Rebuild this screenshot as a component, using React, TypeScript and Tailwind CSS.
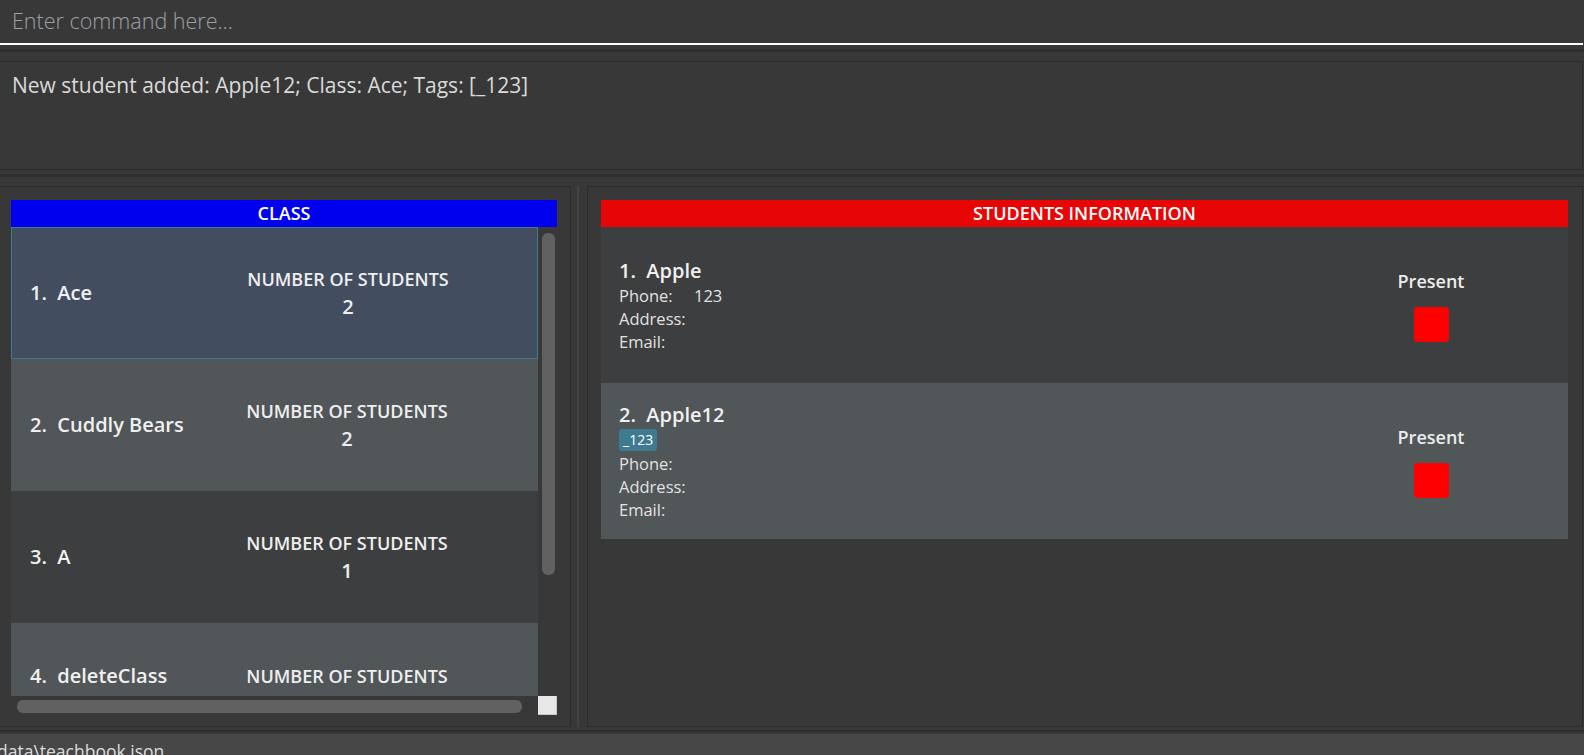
import React from "react";

const classes = [
  { n: 1, name: "Ace", count: 2, bg: "bg-[#424d5f]", selected: true, top: false },
  { n: 2, name: "Cuddly Bears", count: 2, bg: "bg-[#515658]", selected: false, top: false },
  { n: 3, name: "A", count: 1, bg: "bg-[#3c3e3f]", selected: false, top: false },
  { n: 4, name: "deleteClass", count: 0, bg: "bg-[#515658]", selected: false, top: true },
];

function ClassCell({ c }: { c: (typeof classes)[number] }) {
  return (
    <div
      className={`h-[132px] shrink-0 flex ${c.top ? "items-start pt-[39px]" : "items-center"} ${c.bg} ${
        c.selected ? "border border-[#3e7b91]" : ""
      }`}
    >
      <div
        className={`w-[231px] shrink-0 ${c.selected ? "pl-[18px]" : "pl-[19px]"} whitespace-pre text-[20px] font-semibold leading-[28px] text-[#f0f0f0]`}
      >
        {`${c.n}.  ${c.name}`}
      </div>
      <div className="w-[210px] shrink-0 flex flex-col items-center text-[#eeeeee]">
        <div className="text-[18px] font-semibold leading-[28px] whitespace-nowrap">NUMBER OF STUDENTS</div>
        {!c.top && <div className="text-[20px] font-semibold leading-[28px]">{c.count}</div>}
      </div>
    </div>
  );
}

function StudentCard({
  n,
  name,
  phone,
  tag,
  bg,
}: {
  n: number;
  name: string;
  phone?: string;
  tag?: string;
  bg: string;
}) {
  return (
    <div className={`h-[156px] shrink-0 flex items-center ${bg}`}>
      <div className="flex-1 pl-[18px] flex flex-col text-[#e2e2e2]">
        <div className="whitespace-pre text-[20px] font-semibold leading-[26px] text-[#f0f0f0]">{`${n}.  ${name}`}</div>
        {tag && (
          <div className="flex mt-[1px] mb-[1px]">
            <span className="bg-[#3e7b91] rounded-[2px] px-[4px] text-[14px] leading-[22px] text-white">{tag}</span>
          </div>
        )}
        <div className="flex text-[16.5px] leading-[23px]">
          <span className="w-[75px]">Phone:</span>
          {phone && <span>{phone}</span>}
        </div>
        <div className="text-[16.5px] leading-[23px]">Address:</div>
        <div className="text-[16.5px] leading-[23px]">Email:</div>
      </div>
      <div className="w-[100px] mr-[87px] flex flex-col items-center">
        <div className="text-[18px] font-semibold leading-[24px] text-[#ececec]">Present</div>
        <div className="mt-[14px] w-[35px] h-[35px] rounded-[4px] bg-[#ff0000]" />
      </div>
    </div>
  );
}

export default function App() {
  return (
    <div className="w-[1584px] h-[755px] overflow-hidden bg-[#383838] flex flex-col font-['Open_Sans',sans-serif]">
      {/* command box */}
      <div className="h-[45px] shrink-0 border-b-2 border-white flex items-center pl-[12px] mr-[1px] text-[21.5px] font-light text-[#9ca0a4]">
        Enter command here...
      </div>
      {/* divider */}
      <div className="h-[16px] shrink-0 pt-[4px]">
        <div className="h-[3px] bg-[#2e2e2e]" />
      </div>
      {/* result display */}
      <div className="h-[109px] shrink-0 border border-l-0 border-[#2b2b2b] mr-[1px] pl-[12px] pt-[10px] text-[21px] leading-[26px] text-[#dadada]">
        New student added: Apple12; Class: Ace; Tags: [_123]
      </div>
      {/* divider */}
      <div className="h-[16px] shrink-0 pt-[4px]">
        <div className="h-[3px] bg-[#2e2e2e]" />
      </div>
      {/* panels */}
      <div className="h-[541px] shrink-0 flex">
        {/* class panel */}
        <div className="w-[571px] shrink-0 border border-l-0 border-[#2b2b2b] pl-[11px] pr-[13px] pt-[13px] flex flex-col">
          <div className="h-[27px] shrink-0 bg-[#0000ee] flex items-center justify-center text-[18px] font-semibold text-white">
            CLASS
          </div>
          <div className="flex">
            <div className="w-[527px] h-[469px] overflow-hidden flex flex-col">
              {classes.map((c) => (
                <ClassCell key={c.n} c={c} />
              ))}
            </div>
            <div className="w-[19px] h-[469px] pl-[4px] pr-[2px] pt-[6px]">
              <div className="w-[13px] h-[342px] rounded-[6px] bg-[#616161]" />
            </div>
          </div>
          <div className="flex h-[19px]">
            <div className="w-[527px] pl-[6px] pr-[16px] pt-[4px]">
              <div className="h-[13px] rounded-[6px] bg-[#616161]" />
            </div>
            <div className="w-[19px] h-[19px] bg-[#e8e8e8] border-b border-r border-[#c8c8c8]" />
          </div>
        </div>
        {/* split divider */}
        <div className="w-[16px] shrink-0 flex justify-center pr-[2px]">
          <div className="w-[2px] h-full bg-[#434343]" />
        </div>
        {/* students panel */}
        <div className="w-[996px] shrink-0 border border-[#2b2b2b] pl-[13px] pr-[14px] pt-[13px] flex flex-col">
          <div className="h-[27px] shrink-0 bg-[#e80505] flex items-center justify-center text-[18px] font-semibold text-white">
            STUDENTS INFORMATION
          </div>
          <div className="flex flex-col">
            <StudentCard n={1} name="Apple" phone="123" bg="bg-[#3c3e3f]" />
            <StudentCard n={2} name="Apple12" tag="_123" bg="bg-[#515658]" />
          </div>
        </div>
      </div>
      {/* divider */}
      <div className="h-[7px] shrink-0 pt-[3px]">
        <div className="h-[2px] bg-[#2e2e2e]" />
      </div>
      {/* status bar */}
      <div className="flex-1 bg-[#474747] pt-[6px] text-[17.5px] leading-[22px] text-[#dddddd] whitespace-pre overflow-hidden">
        <span className="ml-[-3px]">data\teachbook.json</span>
      </div>
    </div>
  );
}
